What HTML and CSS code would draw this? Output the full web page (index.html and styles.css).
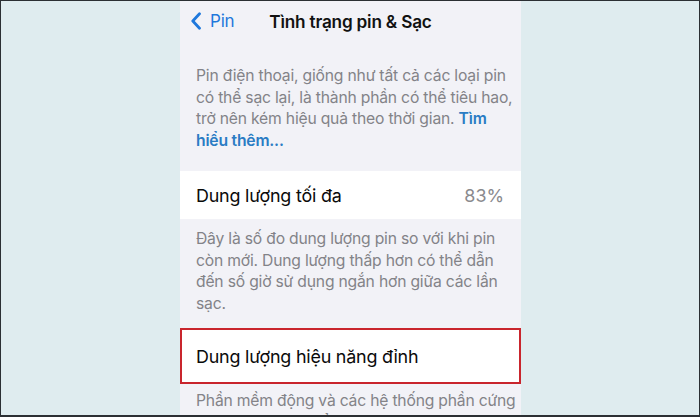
FILE: index.html
```html
<!DOCTYPE html>
<html lang="vi">
<head>
<meta charset="utf-8">
<link rel="stylesheet" href="styles.css">
</head>
<body>
<div class="frame">
  <div class="side"></div>
  <div class="phone">
    <div class="nav">
      <div class="back">
        <svg class="chev" width="12" height="18" viewBox="0 0 12 18"><path d="M9.5 1.8 L2.8 9 L9.5 16.2" fill="none" stroke="#1f78dc" stroke-width="2.8" stroke-linecap="round" stroke-linejoin="round"/></svg>
        <span class="back-label">Pin</span>
      </div>
      <div class="title">Tình trạng pin &amp; Sạc</div>
    </div>
    <p class="note first">Pin điện thoại, giống như tất cả các loại pin<br>có thể sạc lại, là thành phần có thể tiêu hao,<br>trở nên kém hiệu quả theo thời gian. <span class="link">Tìm<br>hiểu thêm...</span></p>
    <div class="row">
      <span class="label">Dung lượng tối đa</span>
      <span class="value">83%</span>
    </div>
    <p class="note second">Đây là số đo dung lượng pin so với khi pin<br>còn mới. Dung lượng thấp hơn có thể dẫn<br>đến số giờ sử dụng ngắn hơn giữa các lần<br>sạc.</p>
    <div class="row highlight">
      <span class="label">Dung lượng hiệu năng đỉnh</span>
    </div>
    <p class="note third">Phần mềm động và các hệ thống phần cứng<br>đã được cài đặt để ngăn chặn các hiệu ứng</p>
  </div>
  <div class="side"></div>
</div>
</body>
</html>
```
FILE: styles.css
```css
html, body {
  margin: 0;
  padding: 0;
}
body {
  width: 700px;
  height: 417px;
  overflow: hidden;
  font-family: Inter, "Noto Sans", "DejaVu Sans", sans-serif;
}
.frame {
  box-sizing: border-box;
  width: 700px;
  height: 417px;
  border: 1px solid #2b2f33;
  border-bottom-width: 2px;
  background: #dfecef;
  display: grid;
  grid-template-columns: 179px 341px 1fr;
  overflow: hidden;
}
.phone {
  background: #f2f2f7;
  height: 100%;
  overflow: hidden;
}
.nav {
  height: 40px;
  position: relative;
  display: flex;
  align-items: center;
  justify-content: center;
}
.back {
  position: absolute;
  left: 10px;
  top: 0;
  height: 40px;
  display: flex;
  align-items: center;
  gap: 8px;
}
.chev {
  display: block;
}
.back-label {
  color: #1f78dc;
  font-size: 17px;
  letter-spacing: -0.2px;
}
.title {
  font-size: 17.2px;
  font-weight: 600;
  color: #111;
  letter-spacing: -0.2px;
}
.note {
  margin: 0;
  padding: 0 8px 0 16px;
  font-size: 15.7px;
  line-height: 21.5px;
  color: #838388;
  letter-spacing: -0.2px;
  white-space: nowrap;
}
.note.first {
  margin-top: 24px;
}
.link {
  color: #2a7cc4;
  font-weight: 600;
}
.row {
  box-sizing: border-box;
  height: 48px;
  background: #fff;
  display: flex;
  align-items: center;
  justify-content: space-between;
  padding: 0 17px 0 16px;
  margin-top: 20px;
}
.label {
  font-size: 17.9px;
  color: #0a0a0a;
  letter-spacing: -0.2px;
}
.value {
  font-size: 17.9px;
  color: #8a8a8e;
}
.note.second {
  margin-top: 9px;
}
.row.highlight {
  height: 56px;
  margin-top: 14px;
  border: 2px solid #c9252d;
  padding-left: 14px;
}
.note.third {
  margin-top: 6px;
}
```
